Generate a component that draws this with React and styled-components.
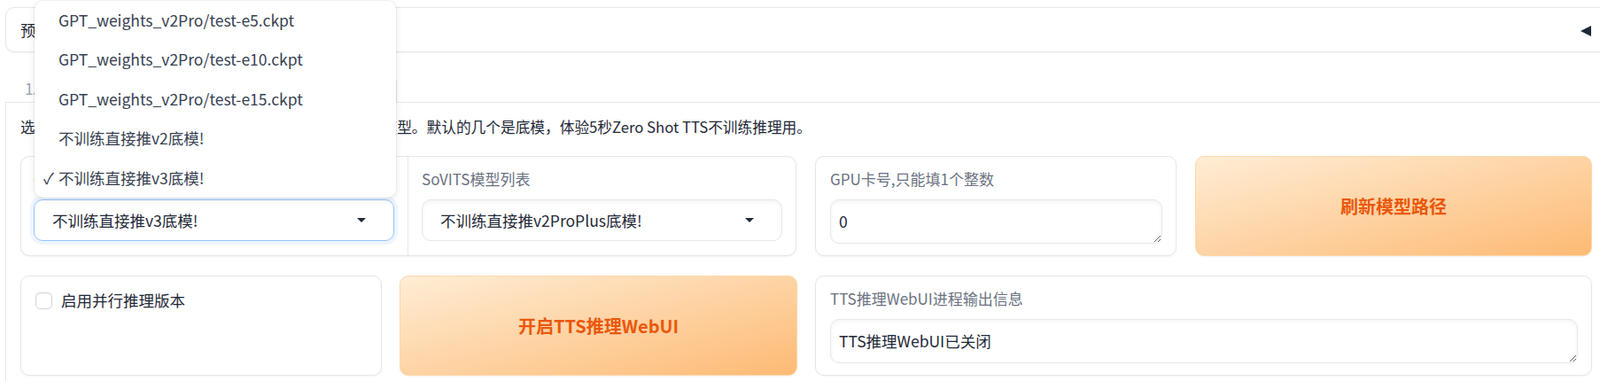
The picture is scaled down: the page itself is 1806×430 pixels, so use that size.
import React from 'react';
import styled, { createGlobalStyle } from 'styled-components';

const GlobalStyle = createGlobalStyle`
  html, body {
    margin: 0;
    padding: 0;
    background: #fff;
    overflow: hidden;
  }
  body {
    font-family: "Noto Sans CJK SC", "Noto Sans", sans-serif;
    font-size: 17.5px;
    color: #1f2937;
  }
  * { box-sizing: border-box; }
`;

const gptOptions = [
  'GPT_weights_v2Pro/test-e5.ckpt',
  'GPT_weights_v2Pro/test-e10.ckpt',
  'GPT_weights_v2Pro/test-e15.ckpt',
  '不训练直接推v2底模!',
  '不训练直接推v3底模!',
];

const tabs = ['1A-训练集格式化工具', '1B-微调训练', '1C-推理'];

const Caret = () => (
  <svg width="10" height="5" viewBox="0 0 10 5">
    <polygon points="0,0 10,0 5,5" fill="#1f2937" />
  </svg>
);

const App = () => {
  const selected = '不训练直接推v3底模!';
  return (
    <Page>
      <GlobalStyle />
      <Accordion>
        <span>预训练模型路径</span>
        <AccordionIcon width="12" height="12" viewBox="0 0 12 12">
          <polygon points="12,0 12,12 0,6" fill="#1f2937" />
        </AccordionIcon>
      </Accordion>

      <TabNav>
        {tabs.map(t => (
          <TabButton key={t} $selected={t === '1C-推理'}>{t}</TabButton>
        ))}
      </TabNav>

      <TabPanel>
        <Intro>
          选择训练完存放在SoVITS_weights和GPT_weights下的模型。默认的几个是底模，体验5秒Zero Shot TTS不训练推理用。
        </Intro>

        <Row $cols="876px 408px 448px" $gap="21px" $top="21px" $height="111px">
          <Form>
            <FormColumn>
              <BlockLabel>GPT模型列表</BlockLabel>
              <Dropdown $focused>
                <span>{selected}</span>
                <Caret />
                <OptionsMenu>
                  {gptOptions.map(o => (
                    <OptionItem key={o}>
                      <CheckMark $visible={o === selected}>✓</CheckMark>
                      {o}
                    </OptionItem>
                  ))}
                </OptionsMenu>
              </Dropdown>
            </FormColumn>
            <FormColumn>
              <BlockLabel>SoVITS模型列表</BlockLabel>
              <Dropdown>
                <span>不训练直接推v2ProPlus底模!</span>
                <Caret />
              </Dropdown>
            </FormColumn>
          </Form>

          <Block>
            <BlockLabel>GPU卡号,只能填1个整数</BlockLabel>
            <TextArea defaultValue="0" />
          </Block>

          <PrimaryButton>刷新模型路径</PrimaryButton>
        </Row>

        <Row $cols="408px 449px 877px" $gap="20px" $top="24px" $height="112px">
          <Block>
            <CheckboxRow>
              <Checkbox type="checkbox" />
              <span>启用并行推理版本</span>
            </CheckboxRow>
          </Block>

          <PrimaryButton>开启TTS推理WebUI</PrimaryButton>

          <Block>
            <BlockLabel>TTS推理WebUI进程输出信息</BlockLabel>
            <TextArea defaultValue="TTS推理WebUI已关闭" />
          </Block>
        </Row>
      </TabPanel>
    </Page>
  );
};

export default App;

const Page = styled.div`
  width: 1808px;
  margin-left: 6px;
  padding-top: 8px;
`;

const Accordion = styled.div`
  height: 51px;
  display: flex;
  align-items: center;
  justify-content: space-between;
  padding: 0 17px 0 16px;
  border: 1px solid #e5e7eb;
  border-radius: 10px;
  background: #fff;
  box-shadow: 0 1px 2px rgba(0, 0, 0, 0.05);
  line-height: 24px;
`;

const AccordionIcon = styled.svg`
  margin-top: 2px;
`;

const TabNav = styled.div`
  display: flex;
  margin-top: 24px;
  padding-left: 3px;
  border-bottom: 1px solid #e5e7eb;
`;

const TabButton = styled.div`
  padding: 5px 18px;
  line-height: 22px;
  font-size: 17.5px;
  margin-bottom: -1px;
  border: 1px solid transparent;
  border-bottom: none;
  border-radius: 10px 10px 0 0;
  color: #9ca3af;
  white-space: nowrap;

  ${p => p.$selected && `
    border-color: #e5e7eb;
    background: #fff;
    color: #1f2937;
  `}
`;

const TabPanel = styled.div`
  border: 1px solid #e5e7eb;
  border-top: none;
  border-radius: 0 0 10px 10px;
  padding: 15px 16px 16px 16px;
`;

const Intro = styled.p`
  margin: 0;
  line-height: 24px;
  font-size: 16.7px;
  color: #1f2937;
`;

const Row = styled.div`
  display: grid;
  grid-template-columns: ${p => p.$cols};
  column-gap: ${p => p.$gap};
  margin-top: ${p => p.$top};
  height: ${p => p.$height};
`;

const Form = styled.div`
  display: flex;
  gap: 1px;
  background: #e5e7eb;
  border: 1px solid #e5e7eb;
  border-radius: 10px;
  box-shadow: 0 1px 2px rgba(0, 0, 0, 0.05);
`;

const FormColumn = styled.div`
  flex: 1;
  background: #fff;
  padding: 15px 15px 13px 14px;

  &:first-child { border-radius: 9px 0 0 9px; }
  &:last-child { border-radius: 0 9px 9px 0; padding-left: 15px; }
`;

const Block = styled.div`
  background: #fff;
  border: 1px solid #e5e7eb;
  border-radius: 10px;
  padding: 15px 15px 13px 16px;
  box-shadow: 0 1px 2px rgba(0, 0, 0, 0.05);
`;

const BlockLabel = styled.span`
  display: block;
  font-size: 17px;
  line-height: 20px;
  color: #6b7280;
  margin-bottom: 13px;
  white-space: nowrap;
`;

const Dropdown = styled.div`
  position: relative;
  height: 47px;
  display: flex;
  align-items: center;
  justify-content: space-between;
  padding: 0 31px 0 20px;
  background: #fff;
  border: 1px solid ${p => (p.$focused ? '#93c5fd' : '#e5e7eb')};
  border-radius: 10px;
  box-shadow: ${p => (p.$focused
    ? '0 0 0 4px #eef5ff'
    : 'inset 0 2px 4px rgba(0, 0, 0, 0.05)')};
  font-size: 17.5px;
  color: #1f2937;
  white-space: nowrap;
`;

const OptionsMenu = styled.ul`
  position: absolute;
  left: 0;
  bottom: calc(100% + 3px);
  width: 408px;
  margin: 0;
  padding: 0;
  list-style: none;
  background: #fff;
  border-radius: 10px;
  box-shadow: 0 2px 8px rgba(0, 0, 0, 0.1), 0 0 0 1px rgba(0, 0, 0, 0.03);
  z-index: 20;
`;

const OptionItem = styled.li`
  display: flex;
  padding: 10px;
  line-height: 24.5px;
  font-size: 17.5px;
  color: #374151;
  white-space: nowrap;
`;

const CheckMark = styled.span`
  display: inline-block;
  width: 12px;
  margin-right: 5px;
  visibility: ${p => (p.$visible ? 'visible' : 'hidden')};
`;

const TextArea = styled.textarea`
  display: block;
  width: 100%;
  height: 50px;
  padding: 12px 9px;
  border: 1px solid #e5e7eb;
  border-radius: 10px;
  font-family: inherit;
  font-size: 17.5px;
  line-height: 24px;
  color: #1f2937;
  background: #fff;
  box-shadow: inset 0 2px 4px rgba(0, 0, 0, 0.05);
  resize: vertical;
  outline: none;
`;

const PrimaryButton = styled.button`
  font-family: inherit;
  font-size: 20px;
  font-weight: 700;
  color: #ea580c;
  background: linear-gradient(to bottom right, #ffedd5, #fdba74);
  border: 1px solid #fed7aa;
  border-radius: 10px;
  box-shadow: 0 1px 2px rgba(0, 0, 0, 0.05);
  cursor: pointer;
`;

const CheckboxRow = styled.label`
  display: flex;
  align-items: center;
  gap: 10px;
  line-height: 24px;
  font-size: 17.5px;
  color: #1f2937;
`;

const Checkbox = styled.input`
  appearance: none;
  width: 19px;
  height: 19px;
  margin: 0;
  border: 1px solid #d1d5db;
  border-radius: 5px;
  background: #fff;
  box-shadow: inset 0 1px 2px rgba(0, 0, 0, 0.05);
`;
